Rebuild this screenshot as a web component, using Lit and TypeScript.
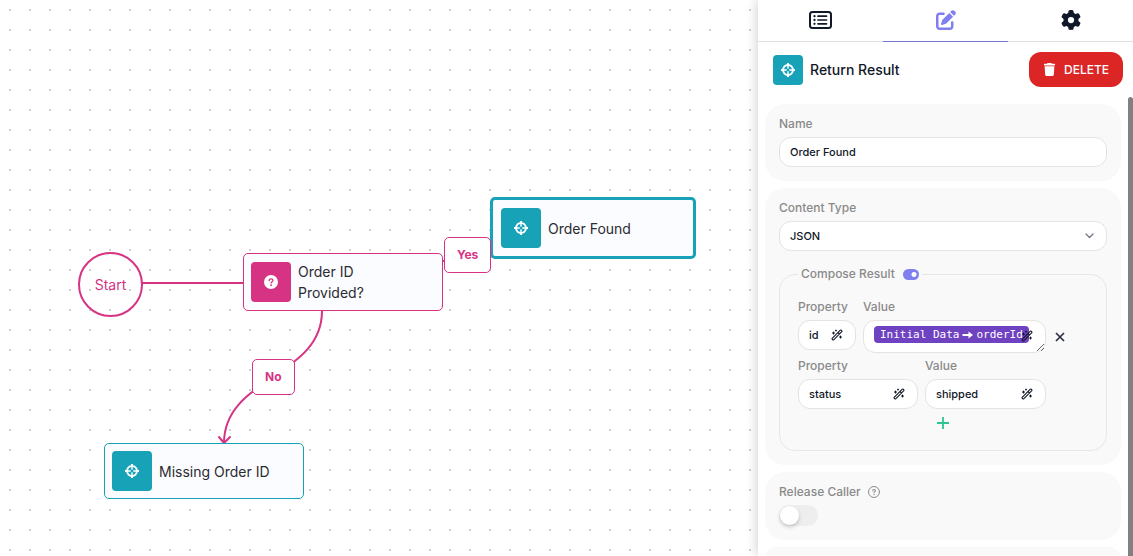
import { LitElement, html, svg, css } from "lit";
import { customElement, property, state } from "lit/decorators.js";

const crosshair = html`<svg viewBox="0 0 14 14" width="14" height="14" fill="none" stroke="currentColor" aria-hidden="true">
  <circle cx="7" cy="7" r="4.9" stroke-width="2"></circle>
  <path d="M7 0v2M7 12v2M0 7h2M12 7h2" stroke-width="2"></path>
  <path d="M7 3v2.8M7 8.2V11M3 7h2.8M8.2 7H11" stroke-width="1.4"></path>
</svg>`;

const question = html`<svg viewBox="0 0 14 14" width="14" height="14" aria-hidden="true">
  <circle cx="7" cy="7" r="7" fill="#fff"></circle>
  <path d="M5.1 5.6c.1-1.2.9-1.8 2-1.8 1.1 0 1.9.7 1.9 1.7 0 1.3-1.9 1.3-1.9 2.6" fill="none" stroke="#d63384" stroke-width="1.3" stroke-linecap="round"></path>
  <circle cx="7.1" cy="10.2" r=".9" fill="#d63384"></circle>
</svg>`;

const wand = html`<svg viewBox="0 0 24 24" width="12" height="12" fill="none" stroke="currentColor" stroke-width="2.2" stroke-linecap="round" stroke-linejoin="round" aria-hidden="true">
  <path d="m21.64 3.64-1.28-1.28a1.21 1.21 0 0 0-1.72 0L2.36 18.64a1.21 1.21 0 0 0 0 1.72l1.28 1.28a1.2 1.2 0 0 0 1.72 0L21.64 5.36a1.2 1.2 0 0 0 0-1.72M14 7l3 3M5 6v4M19 14v4M10 2v2M7 8H3M21 16h-4M11 3H9"></path>
</svg>`;

interface FlowNode {
  id: string;
  kind: "result" | "decision";
  label: string;
  x: number;
  y: number;
  selected?: boolean;
}

const nodes: FlowNode[] = [
  { id: "check", kind: "decision", label: "Order ID Provided?", x: 243, y: 253 },
  { id: "found", kind: "result", label: "Order Found", x: 490, y: 197, selected: true },
  { id: "missing", kind: "result", label: "Missing Order ID", x: 104, y: 443 },
];

const branches = [
  { label: "Yes", x: 444, y: 237 },
  { label: "No", x: 252, y: 359 },
];

@customElement("flow-canvas")
export class FlowCanvas extends LitElement {
  static styles = css`
    :host {
      display: block;
      position: relative;
      overflow: hidden;
      background: #fff conic-gradient(from 270deg at 2px 2px, #d0d0d8 90deg, transparent 0) 9px 9px / 20px 20px;
      color: #2b2b30;
      font-size: 14px;
      line-height: 21px;
    }
    .edges { position: absolute; inset: 0; width: 100%; height: 100%; }
    .start {
      position: absolute;
      box-sizing: border-box;
      width: 65px;
      height: 65px;
      display: grid;
      place-items: center;
      border: 2px solid #d63384;
      border-radius: 50%;
      color: #d63384;
    }
    .node {
      position: absolute;
      box-sizing: border-box;
      width: 200px;
      display: flex;
      align-items: center;
      gap: 7px;
      padding: 7px;
      border: 1px solid #17a2b8;
      border-radius: 5px;
      background: #fbfcff;
    }
    .node.decision { border-color: #d63384; }
    .node.selected { width: 206px; padding: 8px; border-width: 3px; }
    .badge {
      flex: none;
      width: 40px;
      height: 40px;
      display: grid;
      place-items: center;
      border-radius: 4px;
      background: #17a2b8;
      color: #fff;
    }
    .decision .badge { background: #d63384; }
    .text { max-width: 120px; }
    .decision .text { max-width: 90px; }
    .branch {
      position: absolute;
      padding: 7px 12px;
      border: 1px solid #d63384;
      border-radius: 5px;
      background: #fff;
      color: #d63384;
      font-size: 12px;
      font-weight: 700;
      line-height: 20px;
    }
  `;

  render() {
    return html`
      <svg class="edges" fill="none" stroke="#d63384" stroke-width="2" aria-hidden="true">
        ${svg`<path d="M142 283H243"></path>
        <path d="M443 261H470"></path>
        <path d="M322 311C322 377 224 377 224 443"></path>
        <path d="M219 437L224 443L230 437" stroke-linecap="round" stroke-linejoin="round"></path>`}
      </svg>
      <div class="start" style="left:78px;top:252px">Start</div>
      ${nodes.map(
        (n) => html`<div class="node ${n.kind} ${n.selected ? "selected" : ""}" style="left:${n.x}px;top:${n.y}px">
          <span class="badge">${n.kind === "decision" ? question : crosshair}</span>
          <span class="text">${n.label}</span>
        </div>`
      )}
      ${branches.map((b) => html`<div class="branch" style="left:${b.x}px;top:${b.y}px">${b.label}</div>`)}
    `;
  }
}

@customElement("wand-field")
export class WandField extends LitElement {
  @property() label = "";
  @property() value = "";

  static styles = css`
    :host { display: block; min-width: 0; }
    label {
      display: block;
      margin-bottom: 3px;
      color: #8a8a8a;
      font-size: 12px;
      font-weight: 500;
      line-height: 20px;
    }
    .box {
      box-sizing: border-box;
      height: 30px;
      display: flex;
      align-items: center;
      padding: 0 12px 0 10px;
      border: 1px solid #e3e3e6;
      border-radius: 12px;
      background: #fff;
    }
    input {
      flex: 1;
      min-width: 0;
      width: 0;
      padding: 0;
      border: 0;
      outline: 0;
      background: none;
      color: #111827;
      font: 500 11px Inter, sans-serif;
    }
    button {
      display: grid;
      padding: 0;
      border: 0;
      background: none;
      color: #111827;
    }
  `;

  render() {
    return html`<label for="field">${this.label}</label>
      <div class="box">
        <input id="field" .value=${this.value} />
        <button aria-label="Insert data">${wand}</button>
      </div>`;
  }
}

@customElement("node-panel")
export class NodePanel extends LitElement {
  @state() private compose = true;

  static styles = css`
    :host {
      display: flex;
      flex-direction: column;
      min-height: 0;
      overflow: hidden;
      background: #fff;
      color: #111827;
      box-shadow: 0 0 12px rgba(0, 0, 0, 0.22);
    }
    button { font-family: inherit; cursor: pointer; }
    .tabs { flex: none; display: grid; grid-template-columns: repeat(3, 1fr); }
    .tab {
      height: 42px;
      display: grid;
      place-items: center;
      padding: 0 0 2px;
      border: 0;
      border-bottom: 1px solid #e0e0e0;
      background: none;
      color: #111827;
    }
    .tab.active { border-color: #7c75d8; color: #7f7ff0; }
    .head {
      flex: none;
      display: flex;
      align-items: center;
      gap: 7px;
      height: 55px;
      padding: 0 10px 0 15px;
    }
    .badge {
      width: 30px;
      height: 30px;
      display: grid;
      place-items: center;
      border-radius: 4px;
      background: #17a2b8;
      color: #fff;
    }
    h2 { flex: 1; margin: 0; font-size: 14px; font-weight: 500; line-height: 20px; }
    .delete {
      height: 35px;
      display: flex;
      align-items: center;
      gap: 8px;
      padding: 0 14px;
      border: 0;
      border-radius: 12px;
      background: #dc2626;
      color: #fff;
      font-size: 12px;
      font-weight: 500;
    }
    .body { flex: 1; min-height: 0; display: flex; }
    .cards {
      flex: 1;
      min-width: 0;
      display: flex;
      flex-direction: column;
      gap: 7px;
      padding: 7px;
      overflow: hidden;
    }
    .bar { flex: none; width: 5px; border-radius: 3px 3px 0 0; background: #808080; }
    .card { flex: none; padding: 10px 14px 14px; border-radius: 20px; background: #f9f9f9; }
    .label {
      display: flex;
      align-items: center;
      gap: 7px;
      margin-bottom: 3px;
      color: #8a8a8a;
      font-size: 12px;
      font-weight: 500;
      line-height: 20px;
    }
    .control {
      box-sizing: border-box;
      display: block;
      width: 100%;
      height: 30px;
      padding: 0 10px;
      border: 1px solid #e3e3e6;
      border-radius: 12px;
      background: #fff;
      color: #111827;
      font: 500 11px Inter, sans-serif;
    }
    .pick { display: grid; align-items: center; }
    .pick > * { grid-area: 1 / 1; }
    .pick select { appearance: none; }
    .pick svg { justify-self: end; margin-right: 13px; pointer-events: none; }
    fieldset {
      min-width: 0;
      margin: 13px 0 0;
      padding: 13px 18px 18px;
      border: 1px solid #e5e7eb;
      border-radius: 16px;
    }
    legend {
      display: flex;
      align-items: center;
      gap: 8px;
      padding: 0 3px;
      color: #8a8a8a;
      font-size: 12px;
      font-weight: 500;
      line-height: 20px;
    }
    .mini {
      appearance: none;
      width: 16px;
      height: 11px;
      margin: 0;
      border-radius: 6px;
      background: radial-gradient(circle at 5px 50%, #fff 2px, transparent 3px) #cfcfd4;
    }
    .mini:checked { background: radial-gradient(circle at 11px 50%, #fff 2px, transparent 3px) #7f7ff0; }
    .row { display: grid; gap: 7px; margin-bottom: 3px; align-items: start; }
    .first { grid-template-columns: 58fr 183fr 35px; }
    .second { grid-template-columns: 120fr 121fr 35px; }
    .rich {
      box-sizing: border-box;
      position: relative;
      height: 33px;
      padding: 5px 10px;
      border: 1px solid #e3e3e6;
      border-radius: 12px;
      background: #fff;
    }
    .chip {
      display: flex;
      align-items: center;
      gap: 3px;
      width: max-content;
      height: 17px;
      padding: 0 6px;
      border-radius: 4px;
      background: #6f42c1;
      color: #fff;
      font: 11px "DejaVu Sans Mono", monospace;
      white-space: nowrap;
    }
    .text { outline: 0; }
    .insert {
      position: absolute;
      right: 12px;
      top: 9px;
      display: grid;
      padding: 0;
      border: 0;
      background: none;
      color: #111827;
    }
    .grip { position: absolute; right: 0; bottom: 0; }
    .plain { display: grid; place-items: center; padding: 0; border: 0; background: none; }
    .remove { width: 14px; height: 14px; margin: 33px 0 0; color: #2b3042; }
    .add { width: 18px; height: 18px; margin: 5px 0 0 136px; color: #2dc58f; }
    .switch {
      appearance: none;
      display: block;
      width: 39px;
      height: 21px;
      margin: 0;
      padding: 1px;
      border-radius: 11px;
      background: #eee;
    }
    .switch::before {
      content: "";
      display: block;
      width: 19px;
      height: 19px;
      border-radius: 50%;
      background: #fff;
      box-shadow: 0 2px 4px rgba(0, 0, 0, 0.2);
    }
    .switch:checked { background: #7f7ff0; padding-left: 19px; }
  `;

  render() {
    return html`
      <nav class="tabs">
        <button class="tab" aria-label="Steps">
          <svg viewBox="0 0 23 18" width="23" height="18" fill="none" stroke="currentColor" stroke-linecap="round">
            <rect x="1" y="1" width="21" height="16" rx="2.5" stroke-width="2"></rect>
            <path d="M9 5.2h8.5M9 9h8.5M9 12.8h8.5" stroke-width="1.7"></path>
            <path d="M5.5 5.2h.01M5.5 9h.01M5.5 12.8h.01" stroke-width="2.3"></path>
          </svg>
        </button>
        <button class="tab active" aria-label="Edit">
          <svg viewBox="0 0 512 512" width="20" height="20" fill="currentColor">
            <path d="M471.6 21.7c-21.9-21.9-57.3-21.9-79.2 0L362.3 51.7l97.9 97.9 30.1-30.1c21.9-21.9 21.9-57.3 0-79.2L471.6 21.7zm-299.2 220c-6.1 6.1-10.8 13.6-13.5 21.9l-29.6 88.8c-2.9 8.6-.6 18.1 5.8 24.6s15.9 8.7 24.6 5.8l88.8-29.6c8.2-2.7 15.7-7.4 21.9-13.5L437.7 172.3 339.7 74.3 172.4 241.7zM96 64C43 64 0 107 0 160V416c0 53 43 96 96 96H352c53 0 96-43 96-96V320c0-17.7-14.3-32-32-32s-32 14.3-32 32v96c0 17.7-14.3 32-32 32H96c-17.7 0-32-14.3-32-32V160c0-17.7 14.3-32 32-32h96c17.7 0 32-14.3 32-32s-14.3-32-32-32H96z"></path>
          </svg>
        </button>
        <button class="tab" aria-label="Settings">
          <svg viewBox="0 0 512 512" width="20" height="20" fill="currentColor">
            <path d="M495.9 166.6c3.2 8.7 .5 18.4-6.4 24.6l-43.3 39.4c1.1 8.3 1.7 16.8 1.7 25.4s-.6 17.1-1.7 25.4l43.3 39.4c6.9 6.2 9.6 15.9 6.4 24.6c-4.4 11.9-9.7 23.3-15.8 34.3l-4.7 8.1c-6.6 11-14 21.4-22.1 31.2c-5.9 7.2-15.7 9.6-24.5 6.8l-55.7-17.7c-13.4 10.3-28.2 18.9-44 25.4l-12.5 57.1c-2 9.1-9 16.3-18.2 17.8c-13.8 2.3-28 3.5-42.5 3.5s-28.7-1.2-42.5-3.5c-9.2-1.5-16.2-8.7-18.2-17.8l-12.5-57.1c-15.8-6.5-30.6-15.1-44-25.4L83.1 425.9c-8.8 2.8-18.6 .3-24.5-6.8c-8.1-9.8-15.5-20.2-22.1-31.2l-4.7-8.1c-6.1-11-11.4-22.4-15.8-34.3c-3.2-8.7-.5-18.4 6.4-24.6l43.3-39.4C64.6 273.1 64 264.6 64 256s.6-17.1 1.7-25.4L22.4 191.2c-6.9-6.2-9.6-15.9-6.4-24.6c4.4-11.9 9.7-23.3 15.8-34.3l4.7-8.1c6.6-11 14-21.4 22.1-31.2c5.9-7.2 15.7-9.6 24.5-6.8l55.7 17.7c13.4-10.3 28.2-18.9 44-25.4l12.5-57.1c2-9.1 9-16.3 18.2-17.8C227.3 1.2 241.5 0 256 0s28.7 1.2 42.5 3.5c9.2 1.5 16.2 8.7 18.2 17.8l12.5 57.1c15.8 6.5 30.6 15.1 44 25.4l55.7-17.7c8.8-2.8 18.6-.3 24.5 6.8c8.1 9.8 15.5 20.2 22.1 31.2l4.7 8.1c6.1 11 11.4 22.4 15.8 34.3zM256 336a80 80 0 1 0 0-160 80 80 0 1 0 0 160z"></path>
          </svg>
        </button>
      </nav>
      <header class="head">
        <span class="badge">${crosshair}</span>
        <h2>Return Result</h2>
        <button class="delete">
          <svg viewBox="0 0 448 512" width="13" height="13" fill="currentColor" aria-hidden="true">
            <path d="M135.2 17.7C140.6 6.8 151.7 0 163.8 0H284.2c12.1 0 23.2 6.8 28.6 17.7L320 32h96c17.7 0 32 14.3 32 32s-14.3 32-32 32H32C14.3 96 0 81.7 0 64S14.3 32 32 32h96l7.2-14.3zM32 128H416L394.8 467c-1.6 25.3-22.6 45-47.9 45H101.1c-25.3 0-46.3-19.7-47.9-45L32 128z"></path>
          </svg>
          DELETE
        </button>
      </header>
      <div class="body">
        <div class="cards">
          <section class="card">
            <label class="label" for="name">Name</label>
            <input class="control" id="name" value="Order Found" />
          </section>
          <section class="card">
            <label class="label" for="type">Content Type</label>
            <div class="pick">
              <select class="control" id="type">
                <option>JSON</option>
                <option>Text</option>
              </select>
              <svg viewBox="0 0 9 6" width="9" height="6" fill="none" stroke="#6b7280" stroke-width="1.2" stroke-linecap="round" stroke-linejoin="round" aria-hidden="true">
                <path d="M1 1l3.5 3.5L8 1"></path>
              </svg>
            </div>
            <fieldset>
              <legend>
                <label for="compose">Compose Result</label>
                <input class="mini" id="compose" type="checkbox" .checked=${this.compose}
                  @change=${(e: Event) => (this.compose = (e.target as HTMLInputElement).checked)} />
              </legend>
              <div class="row first">
                <wand-field label="Property" value="id"></wand-field>
                <div>
                  <span class="label" id="value-label">Value</span>
                  <div class="rich">
                    <div class="text" role="textbox" aria-labelledby="value-label" contenteditable="true"><span class="chip" contenteditable="false"><span>Initial Data</span><svg viewBox="0 0 11 8" width="11" height="8" fill="#fff" aria-hidden="true"><path d="M.5 2.9H6.5V.5L11 4 6.5 7.5V5.1H.5z"></path></svg><span>orderId</span></span></div>
                    <button class="insert" aria-label="Insert data">${wand}</button>
                    <svg class="grip" viewBox="0 0 9 9" width="9" height="9" stroke="#666" stroke-width="1" aria-hidden="true">
                      <path d="M1 8L8 1M5 8L8 5"></path>
                    </svg>
                  </div>
                </div>
                <button class="plain remove" aria-label="Remove property">
                  <svg viewBox="0 0 10 10" width="10" height="10" fill="none" stroke="currentColor" stroke-width="1.7"><path d="M1 1l8 8M9 1L1 9"></path></svg>
                </button>
              </div>
              <div class="row second">
                <wand-field label="Property" value="status"></wand-field>
                <wand-field label="Value" value="shipped"></wand-field>
              </div>
              <button class="plain add" aria-label="Add property">
                <svg viewBox="0 0 12 12" width="12" height="12" stroke="currentColor" stroke-width="1.8" stroke-linecap="round"><path d="M6 .1v11.8M.1 6h11.8"></path></svg>
              </button>
            </fieldset>
          </section>
          <section class="card">
            <label class="label" for="release">Release Caller
              <svg viewBox="0 0 12 12" width="12" height="12" fill="none" stroke="currentColor" stroke-linecap="round" aria-hidden="true">
                <circle cx="6" cy="6" r="5.5"></circle>
                <path d="M4.6 4.7c.1-.8.7-1.2 1.4-1.2.8 0 1.4.5 1.4 1.2 0 .9-1.4 1-1.4 1.9" stroke-width="1.1"></path>
                <path d="M6 8.5h.01" stroke-width="1.4"></path>
              </svg>
            </label>
            <input class="switch" id="release" type="checkbox" role="switch" />
          </section>
          <section class="card"></section>
        </div>
        <div class="bar"></div>
      </div>
    `;
  }
}

@customElement("app-root")
export class AppRoot extends LitElement {
  static styles = css`
    :host {
      display: grid;
      grid-template-columns: minmax(0, 1fr) minmax(375px, 33%);
      grid-template-rows: minmax(0, 1fr);
      height: 100vh;
      font-family: Inter, sans-serif;
    }
    node-panel { z-index: 1; }
  `;

  render() {
    return html`<flow-canvas></flow-canvas><node-panel></node-panel>`;
  }
}
